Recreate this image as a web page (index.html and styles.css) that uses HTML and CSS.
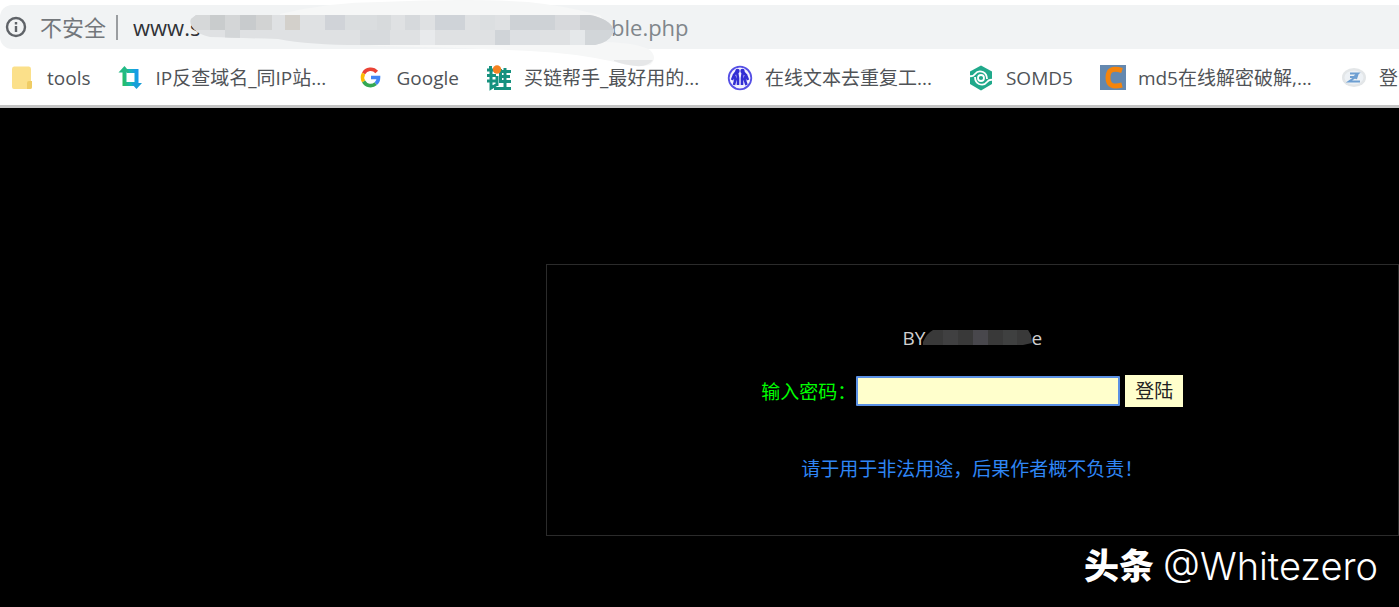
FILE: index.html
```html
<!DOCTYPE html>
<html lang="zh-CN">
<head>
<meta charset="utf-8">
<title>登陆</title>
<link rel="stylesheet" href="styles.css">
</head>
<body>
<header class="browser">
  <div class="address">
    <svg class="info" viewBox="0 0 22 22" aria-hidden="true"><circle cx="11" cy="11" r="9" fill="none" stroke="#5f6368" stroke-width="2.4"/><path d="M11 10v6M11 6v2.4" stroke="#5f6368" stroke-width="2.4"/></svg>
    <span class="insecure">不安全</span>
    <span class="divider"></span>
    <span class="url">www.s</span>
    <span class="path">ble.php</span>
    <svg class="smudge" viewBox="0 0 480 70" aria-hidden="true">
      <defs><clipPath id="brush"><path d="M6 15H400Q420 19 424 30Q422 39 412 43L405 45H170Q120 45 88 39Q50 38 20 37Q8 34 5 30Q-1 24 1 19Z"/></clipPath></defs>
      <path d="M90 14Q140 2 190 2Q280-2 338 2Q370 5 410 15L424 32L415 42Q448 43 460 50Q468 58 460 65Q446 68 425 62Q385 53 340 51Q280 48 190 46L90 38Z" fill="#f6f7f7"/>
      <path d="M424 60H463Q458 67 446 66Q434 65 424 61Z" fill="#e6e7e8"/>
      <g clip-path="url(#brush)">
        <path d="M0 10H430V50H0Z" fill="#dfe1e3"/>
        <path d="M0 15h20v15H0z" fill="#d6d8d9"/><path d="M20 15h15v15H20z" fill="#c9cccd"/><path d="M35 15h15v15H35z" fill="#d4d6d7"/><path d="M50 15h16v15H50z" fill="#c8cbcd"/><path d="M66 15h16v15H66z" fill="#d2d3d3"/><path d="M95 15h15v15H95z" fill="#d3d0cb"/><path d="M110 15h25v15h-25z" fill="#dfe1e3"/><path d="M135 15h20v15h-20z" fill="#d0d3d8"/>
        <path d="M155 15h32v15h-32z" fill="#dadddf"/><path d="M187 15h14v15h-14z" fill="#d7dadc"/><path d="M215 15h15v15h-15z" fill="#d6d9dc"/><path d="M245 15h30v15h-30z" fill="#cfd3d8"/><path d="M290 15h15v15h-15z" fill="#dcdfe1"/><path d="M320 15h45v15h-45z" fill="#ced2d6"/><path d="M365 15h25v15h-25z" fill="#d7d9dc"/><path d="M390 15h35v15h-35z" fill="#cccfd2"/>
        <path d="M35 30h15v15H35z" fill="#d3d6d8"/><path d="M170 30h30v15h-30z" fill="#d7dadd"/><path d="M230 30h15v15h-15z" fill="#e8eaec"/><path d="M305 30h15v15h-15z" fill="#d0d4d8"/><path d="M320 30h30v15h-30z" fill="#dde0e3"/><path d="M380 30h15v15h-15z" fill="#e5e8ea"/><path d="M395 30h30v15h-30z" fill="#d2d6d9"/>
      </g>
    </svg>
  </div>
  <nav class="bookmarks">
    <a class="mark" href="#"><svg class="icon" viewBox="0 0 26 26"><path d="M5 1.500H20Q22 1.500 22 4V16L23 17V22Q23 24 21 24H5Q3 24 3 22V4Q3 1.500 5 1.500Z" fill="#fbe08a"/><path d="M18 24V18Q18 16 20 16H23V22Q23 24 21 24Z" fill="#efcc64"/></svg><span>tools</span></a>
    <a class="mark wide" href="#"><svg class="icon" viewBox="0 0 26 26"><defs><linearGradient id="crop" gradientUnits="userSpaceOnUse" x1="3" x2="23" y1="14" y2="11"><stop offset=".15" stop-color="#26bd68"/><stop offset=".5" stop-color="#18b9b5"/><stop offset=".85" stop-color="#169be8"/></linearGradient></defs><g stroke="url(#crop)" fill="none" stroke-width="4"><path d="M7.500 5V19H18"/><path d="M10 6H19.500V20"/></g><path d="M1.500 7.500L7.500 1L13 7.500Z" fill="#24ba85"/><path d="M14 18H25L19.500 24Z" fill="#179ed8"/></svg><span>IP反查域名_同IP站...</span></a>
    <a class="mark" href="#"><svg class="icon" viewBox="0 0 26 26"><g fill="none" stroke-width="3.600"><path d="M5.600 8.500A8 8 0 0 1 18.700 7" stroke="#ea4335"/><path d="M5.600 8.500A8 8 0 0 0 5.600 16.500" stroke="#fbbc05"/><path d="M5.600 16.500A8 8 0 0 0 17.800 18.600" stroke="#34a853"/><path d="M13 12.500H20.500Q20.500 16.500 17.800 18.600" stroke="#4285f4"/></g></svg><span>Google</span></a>
    <a class="mark wide" href="#"><svg class="icon" viewBox="0 0 26 26"><g fill="none" stroke="#16917f" stroke-width="3"><path d="M4.500 1V6M1 5H9M1 10.500H10M1 16H10M5 6V23L10 20M12 6.500H25M14 11.500H24M14 16.500H25M19 3V22M14.500 4V18M11 11V21M8 23.500H25"/></g><circle cx="11" cy="4.500" r="4.200" fill="#f58220"/></svg><span>买链帮手_最好用的...</span></a>
    <a class="mark wide" href="#"><svg class="icon" viewBox="0 0 26 26"><circle cx="13" cy="13" r="11.300" fill="#f4f3ff" stroke="#554fe5" stroke-width="1.800"/><g fill="none" stroke="#332fd4" stroke-width="2.600"><path d="M10 6L7 10L8.500 14L7 20M10 7L11 13L11 20M16 6L15 13V20M16 7L19 10L17.500 14L19.500 20M7 10L5 15M19 10L21 15"/></g><circle cx="10.500" cy="6" r="2.200" fill="#332fd4"/><circle cx="15.500" cy="6" r="2.200" fill="#332fd4"/></svg><span>在线文本去重复工...</span></a>
    <a class="mark" href="#"><svg class="icon" viewBox="0 0 26 26"><path d="M13 .5L24 6.500V19L13 25.500L2 19V6.500Z" fill="#20a98b"/><g fill="none" stroke="#fff" stroke-width="1.800"><circle cx="13" cy="13" r="3"/><path d="M1 11Q5 12 7 9Q10 5 15 7Q19 9 19 14M25 15Q21 14 19 17Q16 21 11 19Q7 17 7 12"/></g></svg><span>SOMD5</span></a>
    <a class="mark wide" href="#"><svg class="icon" viewBox="0 0 26 26"><path d="M0 0H26V25H0Z" fill="#6488af"/><path d="M22 5.500Q8 1 8 12.500Q8 24 22 20" fill="none" stroke="#f5840c" stroke-width="5"/></svg><span>md5在线解密破解,...</span></a>
    <a class="mark wide" href="#"><svg class="icon" viewBox="0 0 26 26"><ellipse cx="13" cy="12.500" rx="12" ry="9.500" fill="#e3e6e8"/><ellipse cx="13" cy="12.500" rx="9.500" ry="7" fill="#edf1f5"/><path d="M9 8.500H17L13 12H9M16 11L8 16.500H19M17 8L15 14" fill="none" stroke="#6e9fd2" stroke-width="2"/></svg><span>登录</span></a>
  </nav>
</header>
<main class="page">
  <form class="panel">
    <p class="author">BY<svg class="blot" viewBox="0 0 110 18" aria-hidden="true"><path d="M0 13Q4 4 10 1H105L108 6L109 14L100 16H0Z" fill="#393939"/><path d="M20 1H35V16H20Z" fill="#404041"/><path d="M50 1H65V16H50Z" fill="#48474c"/><path d="M80 1H94V16H80Z" fill="#3f4040"/></svg>e</p>
    <div class="login">
      <label for="pass">输入密码：</label>
      <input id="pass" type="password">
      <button type="submit">登陆</button>
    </div>
    <p class="warning">请于用于非法用途，后果作者概不负责！</p>
  </form>
  <footer class="credit"><b>头条</b><span>@Whitezero</span></footer>
</main>
</body>
</html>
```
FILE: styles.css
```css
* { box-sizing: border-box; }

body {
  display: flex;
  flex-direction: column;
  min-height: 100vh;
  margin: 0;
  overflow-x: hidden;
  background: #000;
  font-family: "Open Sans", "Noto Sans CJK SC", sans-serif;
  font-size: 19px;
}

.browser {
  padding-top: 5px;
  overflow: hidden;
  background: #fff;
  border-bottom: 3px solid #c4c4c4;
}

.address {
  position: relative;
  display: flex;
  align-items: center;
  height: 44px;
  padding-left: 5px;
  background: #f1f3f4;
  border-bottom-left-radius: 12px;
  border-top-left-radius: 12px;
  color: #80868b;
  font-size: 22px;
  line-height: 32px;
}

.info { width: 22px; height: 22px; margin-right: 13px; }
.insecure { color: #73777b; }
.divider { width: 2px; height: 25px; margin: 0 15px 0 10px; background: #9a9da0; }
.url { width: 478px; color: #303236; }

.smudge {
  position: absolute;
  top: -5px;
  left: 190px;
  width: 480px;
  height: 70px;
}

.bookmarks {
  display: flex;
  gap: 27px;
  height: 56px;
  padding-top: 2px;
  padding-left: 9px;
  align-items: center;
}

.mark {
  display: flex;
  flex: none;
  gap: 12px;
  align-items: center;
  color: #505357;
  line-height: 28px;
  text-decoration: none;
  white-space: nowrap;
}

.wide { width: 214px; }
.icon { flex: none; width: 26px; height: 26px; }

.page {
  display: flex;
  flex: 1;
  flex-direction: column;
  align-items: flex-end;
  padding-top: 156px;
}

.panel {
  display: flex;
  flex-direction: column;
  align-items: center;
  width: 61%;
  padding: 59px 0 52px;
  border: 1px solid #2b2b2b;
}

.panel p { margin: 0; line-height: 28px; }
.author { display: flex; align-items: center; color: #d0d0d0; }
.blot { width: 110px; height: 18px; margin: 0 -2px; }

.login {
  display: flex;
  align-items: center;
  margin: 23px 0 48px;
}

.login label { color: #0f0; }

.login input {
  width: 264px;
  height: 30px;
  padding: 0 4px;
  background: #ffc;
  border: 2px solid #5b91e5;
  border-radius: 1px;
  outline: none;
  font: inherit;
}

.login button {
  height: 32px;
  margin-left: 5px;
  padding: 0 10px;
  background: #ffc;
  border: 0;
  color: #222;
  font: inherit;
  line-height: 28px;
}

.warning { color: #2f86f5; }

.credit {
  display: flex;
  gap: 9px;
  align-items: center;
  margin-top: 6px;
  padding-right: 21px;
  color: #fff;
  font-family: Inter, "Noto Sans CJK SC", sans-serif;
  font-size: 38px;
  font-weight: 300;
  line-height: 48px;
}

.credit b { font-size: 35px; font-weight: 900; }
```
